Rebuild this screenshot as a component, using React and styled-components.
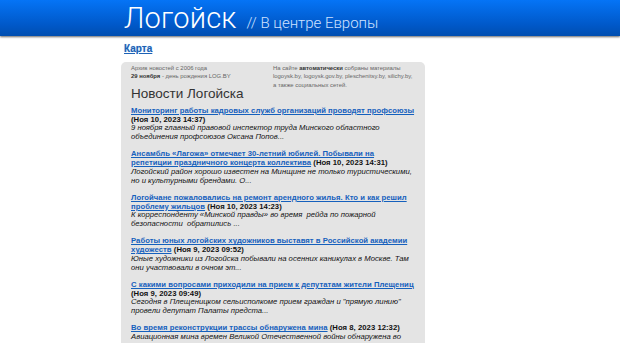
import React from 'react';
import styled, { createGlobalStyle } from 'styled-components';

const news = [
	{
		title: 'Мониторинг работы кадровых служб организаций проводят профсоюзы',
		date: 'Ноя 10, 2023 14:37',
		text: '9 ноября главный правовой инспектор труда Минского областного объединения профсоюзов Оксана Попов...',
	},
	{
		title: 'Ансамбль «Лагожа» отмечает 30-летний юбилей. Побывали на репетиции праздничного концерта коллектива',
		date: 'Ноя 10, 2023 14:31',
		text: 'Логойский район хорошо известен на Минщине не только туристическими, но и культурными брендами. О...',
	},
	{
		title: 'Логойчане пожаловались на ремонт арендного жилья. Кто и как решил проблему жильцов',
		date: 'Ноя 10, 2023 14:23',
		text: 'К корреспонденту «Минской правды» во время\u00a0 рейда по пожарной безопасности\u00a0 обратились ...',
	},
	{
		title: 'Работы юных логойских художников выставят в Российской академии художеств',
		date: 'Ноя 9, 2023 09:52',
		text: 'Юные художники из Логойска побывали на осенних каникулах в Москве. Там они участвовали в очном эт...',
	},
	{
		title: 'С какими вопросами приходили на прием к депутатам жители Плещениц',
		date: 'Ноя 9, 2023 09:49',
		text: 'Сегодня в Плещеницком сельисполкоме прием граждан и "прямую линию" провели депутат Палаты предста...',
	},
	{
		title: 'Во время реконструкции трассы обнаружена мина',
		date: 'Ноя 8, 2023 12:32',
		text: 'Авиационная мина времен Великой Отечественной войны обнаружена во время реконструкции трассы М3...',
	},
];

const App = () => {
	return (
		<>
			<GlobalStyle />
			<Header>
				<HeaderInner>
					<Logo>Логойск</Logo>
					<Slogan>// В центре Европы</Slogan>
				</HeaderInner>
			</Header>
			<Page>
				<Main>
					<MapLink href="#">Карта</MapLink>
					<Panel>
						<InfoRow>
							<Info>
								Архив новостей с 2006 года
								<br />
								<b>29 ноября</b> - день рождения LOG.BY
							</Info>
							<Info>
								На сайте <b>автоматически</b> собраны материалы
								logoysk.by, logoysk.gov.by, pleschenitsy.by, silichy.by,
								а также социальных сетей.
							</Info>
						</InfoRow>
						<Heading>Новости Логойска</Heading>
						{news.map((item) => (
							<Item key={item.date + item.title}>
								<a href="#">{item.title}</a> <Date>({item.date})</Date>
								<Lead>{item.text}</Lead>
							</Item>
						))}
					</Panel>
				</Main>
			</Page>
		</>
	);
};

const GlobalStyle = createGlobalStyle`
	body {
		margin: 0;
		background: #fff;
		font-family: "Liberation Sans", Arial, sans-serif;
		overflow: hidden;
	}
`;

const Header = styled.header`
	height: 36px;
	background: linear-gradient(#0574f6, #0058c8 70%, #004eb0);
	box-shadow: 0 1px 2px rgba(0, 0, 0, 0.6);
`;

const HeaderInner = styled.div`
	width: 378px;
	margin: 0 auto;
	display: flex;
	align-items: baseline;
	padding-left: 3px;
	height: 36px;
	box-sizing: border-box;
	line-height: 36px;
`;

const Logo = styled.h1`
	margin: 0;
	font-family: Roboto, "Liberation Sans", sans-serif;
	font-weight: 300;
	font-size: 29px;
	color: #fff;
	letter-spacing: 0.2px;
`;

const Slogan = styled.span`
	margin-left: 10px;
	font-family: Roboto, "Liberation Sans", sans-serif;
	font-weight: 300;
	font-size: 15px;
	color: #cfe2ff;
`;

const Page = styled.div`
	width: 378px;
	margin: 0 auto;
`;

const Main = styled.main`
	width: 304px;
	display: flex;
	flex-direction: column;
	align-items: flex-start;
`;

const MapLink = styled.a`
	margin: 7px 0 0 3px;
	font-size: 10px;
	line-height: 12px;
	font-weight: bold;
	color: #1d62b5;
	text-shadow: 0 0 1px #9cc4ee;
`;

const Panel = styled.section`
	align-self: stretch;
	margin-top: 7px;
	padding: 2px 10px 20px;
	background: #e4e4e4;
	border-radius: 5px;
	min-height: 400px;
`;

const InfoRow = styled.div`
	display: grid;
	grid-template-columns: 1fr 1fr;
`;

const Info = styled.div`
	font-size: 5.9px;
	line-height: 8.3px;
	color: #666;
	b {
		color: #333;
	}
`;

const Heading = styled.h2`
	margin: -3px 0 5px;
	font-size: 13.5px;
	line-height: 16px;
	font-weight: normal;
	color: #333;
`;

const Item = styled.div`
	font-size: 7.7px;
	line-height: 8.7px;
	margin-bottom: 8.7px;
	letter-spacing: 0.04px;
	a {
		color: #1560bd;
		font-weight: bold;
	}
`;

const Date = styled.span`
	color: #111;
	font-weight: bold;
`;

const Lead = styled.div`
	font-style: italic;
	color: #111;
	letter-spacing: 0;
`;

export default App;
